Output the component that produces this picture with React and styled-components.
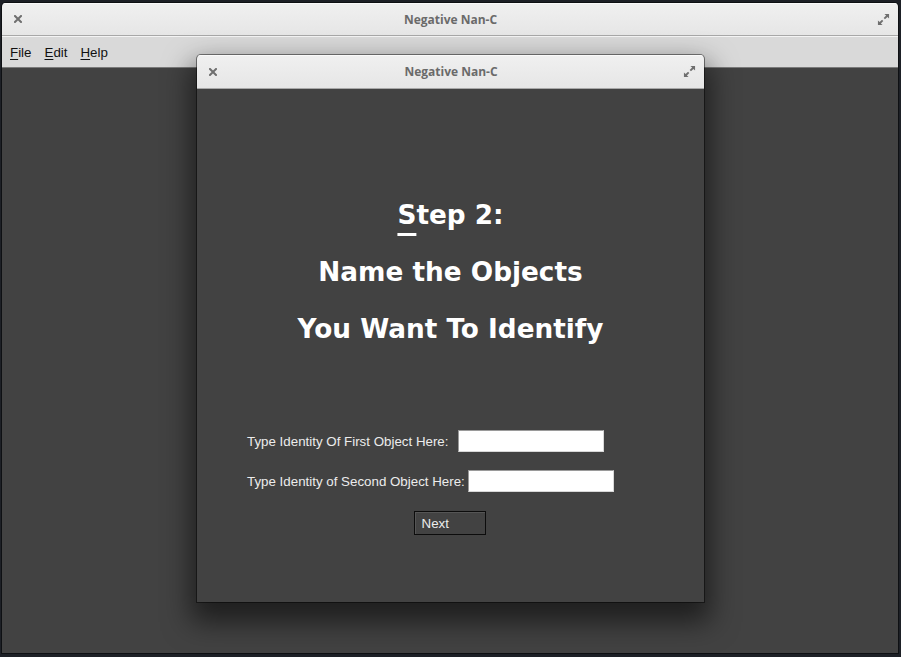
import React from "react";
import styled, { createGlobalStyle } from "styled-components";

const GlobalStyle = createGlobalStyle`
  html, body {
    margin: 0;
    padding: 0;
    background: #1d2026;
    overflow: hidden;
  }
`;

const Desktop = styled.div`
  position: relative;
  width: 901px;
  height: 657px;
  padding: 3px 3px 4px 2px;
  box-sizing: border-box;
  background: #1d2026;
`;

const Window = styled.div`
  display: flex;
  flex-direction: column;
  width: 100%;
  height: 100%;
  border-radius: 4px 4px 0 0;
  overflow: hidden;
  background: #424242;
  box-shadow: 0 0 0 1px rgba(0, 0, 0, 0.5);
`;

const TitleBar = styled.div`
  display: flex;
  align-items: center;
  justify-content: space-between;
  height: ${(p) => p.h}px;
  flex-shrink: 0;
  padding: 0 8px 0 9px;
  box-sizing: border-box;
  background: linear-gradient(180deg, #f0f0f0 0%, #e6e6e6 100%);
  border-bottom: 1px solid #a8a8a8;
  box-shadow: inset 0 1px 0 #fafafa;
`;

const Title = styled.div`
  font-family: "Open Sans", "DejaVu Sans", sans-serif;
  font-weight: 700;
  font-size: 12px;
  color: #6a6a6a;
`;

const IconBox = styled.div`
  width: 14px;
  height: 14px;
  display: flex;
  align-items: center;
  justify-content: center;
`;

const MenuBar = styled.div`
  display: flex;
  align-items: center;
  gap: 11px;
  height: 30px;
  flex-shrink: 0;
  padding: 0 8px 0 7px;
  background: #d9d9d9;
  border-top: 1px solid #f4f4f4;
  border-bottom: 1px solid #7a7a7a;
`;

const MenuItem = styled.span`
  font-family: "Liberation Sans", Arial, sans-serif;
  font-size: 13.33px;
  color: #111;
  padding: 0 1px;
`;

const Mnemonic = styled.span`
  text-decoration: underline;
  text-underline-offset: 2px;
`;

const Content = styled.div`
  flex: 1;
  background: #424242;
`;

const Dialog = styled.div`
  position: absolute;
  left: 197px;
  top: 55px;
  width: 507px;
  height: 547px;
  display: flex;
  flex-direction: column;
  border-radius: 4px 4px 0 0;
  overflow: hidden;
  background: #424242;
  box-shadow: 0 0 0 1px rgba(0, 0, 0, 0.45), 0 14px 28px 6px rgba(0, 0, 0, 0.55);
`;

const Body = styled.div`
  flex: 1;
  display: flex;
  flex-direction: column;
  padding-top: 98px;
`;

const Heading = styled.div`
  font-family: "DejaVu Sans", sans-serif;
  font-weight: 700;
  font-size: 26.3px;
  line-height: 57px;
  color: #ffffff;
  text-align: center;
`;

const Underlined = styled.span`
  text-decoration: underline;
  text-decoration-thickness: 3px;
  text-underline-offset: 9px;
`;

const Form = styled.div`
  display: flex;
  flex-direction: column;
  margin-top: 63px;
  padding-left: 50px;
`;

const Row = styled.div`
  display: flex;
  align-items: center;
  gap: ${(p) => p.gap}px;
  height: 40px;
`;

const Label = styled.label`
  font-family: "Liberation Sans", Arial, sans-serif;
  font-size: 13.33px;
  color: #ececec;
`;

const Entry = styled.input`
  width: 146px;
  height: 22px;
  box-sizing: border-box;
  border: 1px solid #9a9a9a;
  border-right-color: #d8d8d8;
  border-bottom-color: #d8d8d8;
  background: #ffffff;
  outline: none;
  margin: 0;
  padding: 0 3px;
`;

const ButtonRow = styled.div`
  display: flex;
  justify-content: center;
  margin-top: 10px;
  padding-right: 2px;
`;

const Button = styled.button`
  width: 72px;
  height: 24px;
  box-sizing: border-box;
  border: 1px solid #0c0c0c;
  background: #424242;
  color: #ececec;
  font-family: "Liberation Sans", Arial, sans-serif;
  font-size: 13.33px;
  text-align: left;
  padding: 0 0 0 7px;
  box-shadow: inset 1px 1px 0 #555;
`;

const CloseIcon = () => (
  <svg width="8" height="8" viewBox="0 0 8 8">
    <path d="M1 1 L7 7 M7 1 L1 7" stroke="#6f6f6f" strokeWidth="2" strokeLinecap="square" />
  </svg>
);

const MaxIcon = () => (
  <svg width="13" height="13" viewBox="0 0 14 14">
    <path d="M8 1 H13 V6 L11.2 4.2 L8.6 6.8 L7.2 5.4 L9.8 2.8 Z" fill="#6f6f6f" />
    <path d="M6 13 H1 V8 L2.8 9.8 L5.4 7.2 L6.8 8.6 L4.2 11.2 Z" fill="#6f6f6f" />
  </svg>
);

const WindowHeader = ({ h }) => (
  <TitleBar h={h}>
    <IconBox>
      <CloseIcon />
    </IconBox>
    <Title>Negative Nan-C</Title>
    <IconBox>
      <MaxIcon />
    </IconBox>
  </TitleBar>
);

const App = () => {
  return (
    <>
      <GlobalStyle />
      <Desktop>
        <Window>
          <WindowHeader h={33} />
          <MenuBar>
            <MenuItem>
              <Mnemonic>F</Mnemonic>ile
            </MenuItem>
            <MenuItem>
              <Mnemonic>E</Mnemonic>dit
            </MenuItem>
            <MenuItem>
              <Mnemonic>H</Mnemonic>elp
            </MenuItem>
          </MenuBar>
          <Content />
        </Window>

        <Dialog>
          <WindowHeader h={34} />
          <Body>
            <Heading>
              <Underlined>S</Underlined>tep 2:
            </Heading>
            <Heading>Name the Objects</Heading>
            <Heading>You Want To Identify</Heading>
            <Form>
              <Row gap={10}>
                <Label>Type Identity Of First Object Here:</Label>
                <Entry />
              </Row>
              <Row gap={3}>
                <Label>Type Identity of Second Object Here:</Label>
                <Entry />
              </Row>
            </Form>
            <ButtonRow>
              <Button>Next</Button>
            </ButtonRow>
          </Body>
        </Dialog>
      </Desktop>
    </>
  );
};

export default App;
